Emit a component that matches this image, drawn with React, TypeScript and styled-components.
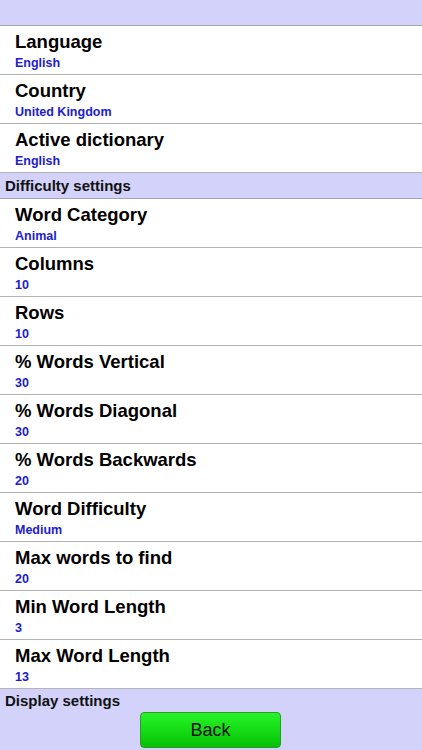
import styled, { createGlobalStyle } from 'styled-components';

const GlobalStyle = createGlobalStyle`
  html, body {
    margin: 0;
    padding: 0;
    background: #ffffff;
    font-family: 'Liberation Sans', Arial, sans-serif;
  }
  * {
    box-sizing: border-box;
  }
`;

const Screen = styled.div`
  width: 422px;
  height: 750px;
  display: flex;
  flex-direction: column;
  overflow: hidden;
  background: #ffffff;
`;

const TopBar = styled.div`
  height: 26px;
  flex-shrink: 0;
  background: #d2d2fa;
  border-bottom: 1px solid #a4a4b0;
`;

const SectionHeader = styled.div`
  height: 26px;
  flex-shrink: 0;
  padding: 1px 0 0 5px;
  background: #d2d2fa;
  border-bottom: 1px solid #a4a4b0;
  font-size: 15px;
  font-weight: bold;
  line-height: 24px;
  color: #111111;
`;

const Row = styled.div`
  height: 49px;
  flex-shrink: 0;
  padding: 5px 0 0 15px;
  display: flex;
  flex-direction: column;
  gap: 4px;
  border-bottom: 1px solid #b4b4b4;
`;

const Title = styled.div`
  font-size: 18.5px;
  font-weight: bold;
  line-height: 21px;
  color: #000000;
`;

const Value = styled.div`
  font-size: 12.5px;
  font-weight: bold;
  line-height: 14px;
  color: #1c1cd0;
`;

const Footer = styled.div`
  flex: 1;
  display: flex;
  flex-direction: column;
  background: #d2d2fa;
`;

const FooterLabel = styled.div`
  height: 23px;
  padding-left: 5px;
  font-size: 15px;
  font-weight: bold;
  line-height: 24px;
  color: #111111;
`;

const BackButton = styled.button`
  align-self: center;
  width: 141px;
  height: 36px;
  margin-left: -1px;
  border: 1px solid #2a9a2a;
  border-radius: 4px;
  background: linear-gradient(to bottom, #28f428 0%, #16dc16 50%, #06c006 100%);
  font-family: 'Liberation Sans', Arial, sans-serif;
  font-size: 18px;
  color: #111111;
  cursor: pointer;
`;

type Setting = { title: string; value: string };

const general: Setting[] = [
  { title: 'Language', value: 'English' },
  { title: 'Country', value: 'United Kingdom' },
  { title: 'Active dictionary', value: 'English' },
];

const difficulty: Setting[] = [
  { title: 'Word Category', value: 'Animal' },
  { title: 'Columns', value: '10' },
  { title: 'Rows', value: '10' },
  { title: '% Words Vertical', value: '30' },
  { title: '% Words Diagonal', value: '30' },
  { title: '% Words Backwards', value: '20' },
  { title: 'Word Difficulty', value: 'Medium' },
  { title: 'Max words to find', value: '20' },
  { title: 'Min Word Length', value: '3' },
  { title: 'Max Word Length', value: '13' },
];

const SettingRow = ({ title, value }: Setting) => (
  <Row>
    <Title>{title}</Title>
    <Value>{value}</Value>
  </Row>
);

const App = () => {
  return (
    <>
      <GlobalStyle />
      <Screen>
        <TopBar />
        {general.map((s) => (
          <SettingRow key={s.title} {...s} />
        ))}
        <SectionHeader>Difficulty settings</SectionHeader>
        {difficulty.map((s) => (
          <SettingRow key={s.title} {...s} />
        ))}
        <Footer>
          <FooterLabel>Display settings</FooterLabel>
          <BackButton type='button'>Back</BackButton>
        </Footer>
      </Screen>
    </>
  );
};

export default App;
